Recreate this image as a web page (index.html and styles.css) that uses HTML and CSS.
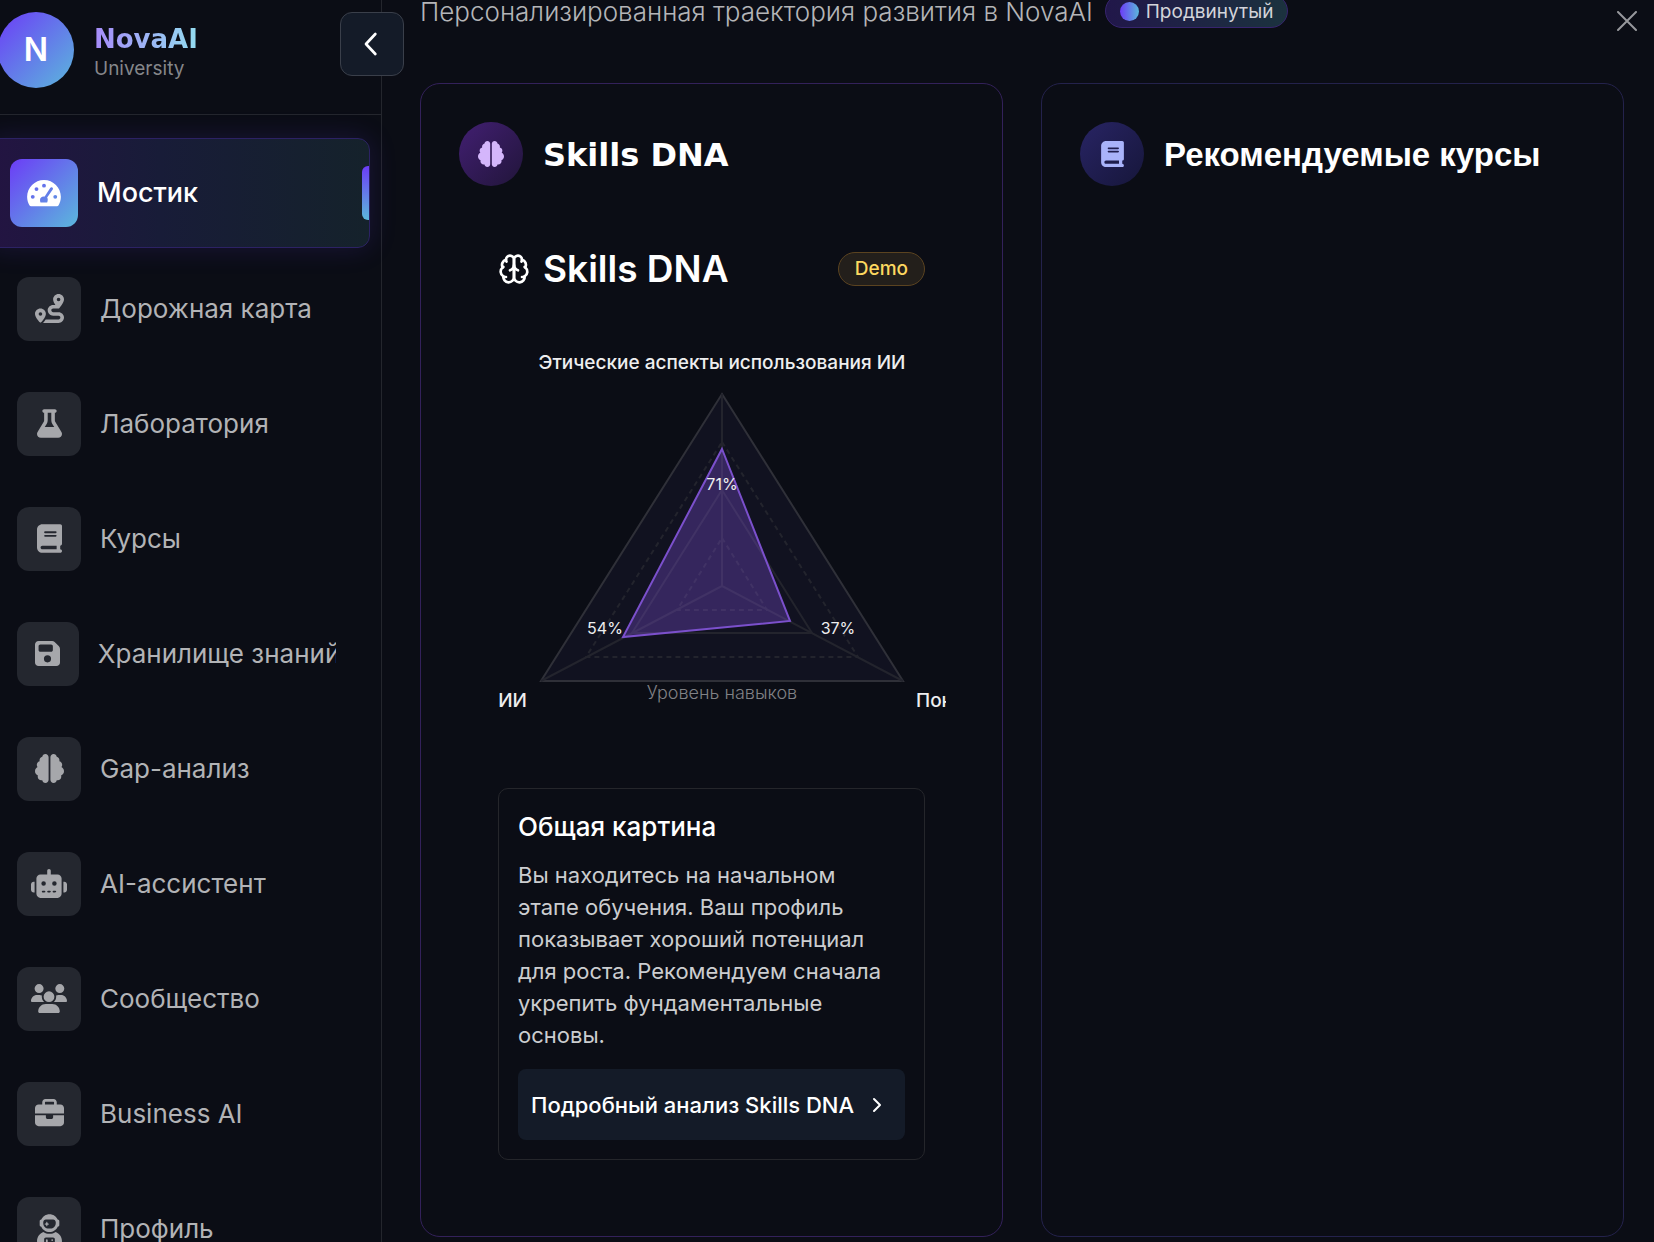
FILE: index.html
```
<!DOCTYPE html>
<html lang="ru">
<head>
<meta charset="utf-8">
<meta name="viewport" content="width=device-width, initial-scale=1">
<title>NovaAI University</title>
<link rel="stylesheet" href="styles.css">
</head>
<body>
<svg class="defs" aria-hidden="true">
  <symbol id="i-brain" viewBox="0 0 512 512"><path d="M184 0c30.900 0 56 25.100 56 56l0 400c0 30.900-25.100 56-56 56c-28.900 0-52.700-21.900-55.700-50.100c-5.200 1.400-10.700 2.100-16.300 2.100c-35.300 0-64-28.700-64-64c0-7.400 1.300-14.600 3.600-21.200C21.400 367.400 0 338.200 0 304c0-31.900 18.700-59.500 45.800-72.300C37.100 220.800 32 207 32 192c0-30.700 21.600-56.300 50.400-62.600C80.800 123.900 80 118 80 112c0-29.900 20.600-55.100 48.300-62.100C131.300 21.900 155.100 0 184 0zM328 0c28.900 0 52.600 21.900 55.700 49.900c27.800 7 48.300 32.100 48.300 62.100c0 6-.8 11.900-2.400 17.400c28.800 6.200 50.400 31.900 50.400 62.600c0 15-5.100 28.800-13.800 39.700C493.300 244.500 512 272.100 512 304c0 34.200-21.400 63.400-51.600 74.800c2.300 6.600 3.600 13.800 3.600 21.200c0 35.300-28.700 64-64 64c-5.600 0-11.100-.7-16.300-2.100c-3 28.200-26.800 50.100-55.700 50.100c-30.900 0-56-25.100-56-56l0-400c0-30.900 25.100-56 56-56z"/></symbol>
  <symbol id="i-book" viewBox="0 0 448 512"><path d="M96 0C43 0 0 43 0 96L0 416c0 53 43 96 96 96l288 0 32 0c17.700 0 32-14.300 32-32s-14.300-32-32-32l0-64c17.700 0 32-14.300 32-32l0-320c0-17.700-14.300-32-32-32L384 0 96 0zm0 384l256 0 0 64L96 448c-17.700 0-32-14.300-32-32s14.300-32 32-32zm32-240c0-8.800 7.200-16 16-16l192 0c8.800 0 16 7.200 16 16s-7.200 16-16 16l-192 0c-8.800 0-16-7.200-16-16zm16 48l192 0c8.800 0 16 7.200 16 16s-7.200 16-16 16l-192 0c-8.800 0-16-7.200-16-16s7.200-16 16-16z"/></symbol>
</svg>
<div class="app">
  <aside class="sidebar">
    <header class="brand">
      <span class="brand-logo">N</span>
      <div class="brand-text">
        <span class="brand-name">NovaAI</span>
        <span class="brand-sub">University</span>
      </div>
      <button class="collapse" type="button" aria-label="Свернуть меню">
        <svg viewBox="0 0 24 24" width="32" height="32"><path d="M14.500 4.500 7.500 12l7 7.500"/></svg>
      </button>
    </header>
    <nav class="nav">
      <a class="nav-item active" href="#">
        <span class="nav-icon"><svg viewBox="0 0 576 512" width="34" height="30"><path fill-rule="evenodd" d="M288 32C129 32 0 161 0 320c0 52.800 14.250 102.260 39 144.800 5.600 9.600 16.300 15.200 27.500 15.200h443c11.100 0 21.800-5.600 27.400-15.200C561.750 422.260 576 372.800 576 320c0-159-129-288-288-288zM288 98a33 33 0 1 1 0 66 33 33 0 1 1 0-66zM96 289a33 33 0 1 1 0 66 33 33 0 1 1 0-66zM160 156a33 33 0 1 1 0 66 33 33 0 1 1 0-66zM480 289a33 33 0 1 1 0 66 33 33 0 1 1 0-66zM437 196 342 334c6 10 10 20 10 34 0 18-3 34-10 48H228c-5-12-8-26-8-42 0-34 28-58 62-58 8 0 12 0 18 1l94-148c8-12 24-15 36-8s16 23 7 35z"/></svg></span>
        <span class="nav-label">Мостик</span>
      </a>
      <a class="nav-item" href="#">
        <span class="nav-icon"><svg viewBox="0 0 512 512" width="29" height="29"><path d="M512 96c0 50.200-59.100 125.100-84.600 155c-3.800 4.400-9.400 6.100-14.500 5L320 256c-17.700 0-32 14.300-32 32s14.300 32 32 32l96 0c53 0 96 43 96 96s-43 96-96 96l-276.400 0c8.700-9.900 19.300-22.600 30-36.800c6.300-8.400 12.800-17.600 19-27.200L416 448c17.700 0 32-14.300 32-32s-14.300-32-32-32l-96 0c-53 0-96-43-96-96s43-96 96-96l39.800 0c-21-31.500-39.800-67.700-39.800-96c0-53 43-96 96-96s96 43 96 96zM117.100 489.100c-3.800 4.300-7.200 8.100-10.100 11.300l-1.800 2-.2-.2c-6 4.600-14.600 4-20-1.800C59.800 473 0 402.500 0 352c0-53 43-96 96-96s96 43 96 96c0 30-21.100 67-43.500 97.900c-10.700 14.700-21.700 28-30.800 38.500l-.6 .7zM128 352a32 32 0 1 0 -64 0 32 32 0 1 0 64 0zM416 128a32 32 0 1 0 0-64 32 32 0 1 0 0 64z"/></svg></span>
        <span class="nav-label">Дорожная карта</span>
      </a>
      <a class="nav-item" href="#">
        <span class="nav-icon"><svg viewBox="0 0 448 512" width="25" height="29"><path d="M288 0L160 0 128 0C110.300 0 96 14.300 96 32s14.300 32 32 32l0 132.800c0 11.800-3.300 23.500-9.500 33.500L10.300 406.200C3.600 417.200 0 429.700 0 442.600C0 480.900 31.100 512 69.400 512l309.200 0c38.300 0 69.400-31.100 69.400-69.400c0-12.800-3.600-25.400-10.300-36.400L329.500 230.400c-6.200-10.100-9.500-21.700-9.500-33.500L320 64c17.700 0 32-14.300 32-32s-14.300-32-32-32L288 0zM192 196.800L192 64l64 0 0 132.800c0 23.700 6.600 46.900 19 67.100L309.500 320l-171 0L173 263.900c12.400-20.200 19-43.400 19-67.100z"/></svg></span>
        <span class="nav-label">Лаборатория</span>
      </a>
      <a class="nav-item" href="#">
        <span class="nav-icon"><svg width="25" height="29"><use href="#i-book"/></svg></span>
        <span class="nav-label">Курсы</span>
      </a>
      <a class="nav-item" href="#">
        <span class="nav-icon"><svg viewBox="0 0 448 512" width="25" height="29"><path d="M64 32C28.700 32 0 60.700 0 96L0 416c0 35.300 28.700 64 64 64l320 0c35.300 0 64-28.700 64-64l0-242.700c0-17-6.700-33.300-18.700-45.300L352 50.700C340 38.700 323.700 32 306.700 32L64 32zm0 96c0-17.700 14.300-32 32-32l192 0c17.700 0 32 14.300 32 32l0 64c0 17.700-14.300 32-32 32L96 224c-17.700 0-32-14.300-32-32l0-64zM224 288a64 64 0 1 1 0 128 64 64 0 1 1 0-128z"/></svg></span>
        <span class="nav-label">Хранилище знаний</span>
      </a>
      <a class="nav-item" href="#">
        <span class="nav-icon"><svg width="29" height="29"><use href="#i-brain"/></svg></span>
        <span class="nav-label">Gap-анализ</span>
      </a>
      <a class="nav-item" href="#">
        <span class="nav-icon"><svg viewBox="0 0 640 512" width="36" height="29"><path d="M320 0c17.700 0 32 14.300 32 32l0 64 120 0c39.800 0 72 32.200 72 72l0 272c0 39.800-32.200 72-72 72l-304 0c-39.800 0-72-32.200-72-72l0-272c0-39.800 32.200-72 72-72l120 0 0-64c0-17.700 14.300-32 32-32zM208 384c-8.800 0-16 7.200-16 16s7.200 16 16 16l32 0c8.800 0 16-7.200 16-16s-7.200-16-16-16l-32 0zm96 0c-8.800 0-16 7.200-16 16s7.200 16 16 16l32 0c8.800 0 16-7.200 16-16s-7.200-16-16-16l-32 0zm96 0c-8.800 0-16 7.200-16 16s7.200 16 16 16l32 0c8.800 0 16-7.200 16-16s-7.200-16-16-16l-32 0zM264 256a40 40 0 1 0 -80 0 40 40 0 1 0 80 0zm152 40a40 40 0 1 0 0-80 40 40 0 1 0 0 80zM48 224l16 0 0 192-16 0c-26.500 0-48-21.500-48-48l0-96c0-26.500 21.500-48 48-48zm544 0c26.500 0 48 21.500 48 48l0 96c0 26.500-21.500 48-48 48l-16 0 0-192 16 0z"/></svg></span>
        <span class="nav-label">AI-ассистент</span>
      </a>
      <a class="nav-item" href="#">
        <span class="nav-icon"><svg viewBox="0 0 640 512" width="36" height="29"><path d="M144 0a80 80 0 1 1 0 160A80 80 0 1 1 144 0zM512 0a80 80 0 1 1 0 160A80 80 0 1 1 512 0zM0 298.700C0 239.800 47.800 192 106.700 192l42.700 0c15.900 0 31 3.500 44.600 9.700c-1.300 7.200-1.900 14.700-1.900 22.300c0 38.200 16.800 72.500 43.300 96c-.2 0-.4 0-.7 0L21.300 320C9.600 320 0 310.400 0 298.700zM405.300 320c-.2 0-.4 0-.7 0c26.600-23.500 43.300-57.800 43.300-96c0-7.600-.7-15-1.900-22.300c13.600-6.300 28.700-9.700 44.600-9.700l42.700 0C592.200 192 640 239.800 640 298.700c0 11.800-9.600 21.300-21.300 21.300l-213.300 0zM224 224a96 96 0 1 1 192 0 96 96 0 1 1 -192 0zM128 485.300C128 411.700 187.700 352 261.300 352l117.300 0C452.300 352 512 411.700 512 485.300c0 14.700-11.900 26.700-26.700 26.700l-330.700 0c-14.700 0-26.700-11.900-26.700-26.700z"/></svg></span>
        <span class="nav-label">Сообщество</span>
      </a>
      <a class="nav-item" href="#">
        <span class="nav-icon"><svg viewBox="0 0 512 512" width="29" height="29"><path d="M184 48l144 0c4.400 0 8 3.600 8 8l0 40L176 96l0-40c0-4.400 3.600-8 8-8zm-56 8l0 40L64 96C28.700 96 0 124.700 0 160l0 96 192 0 128 0 192 0 0-96c0-35.300-28.700-64-64-64l-64 0 0-40c0-30.900-25.100-56-56-56L184 0c-30.900 0-56 25.100-56 56zM512 288l-192 0 0 32c0 17.700-14.300 32-32 32l-64 0c-17.700 0-32-14.300-32-32l0-32L0 288 0 416c0 35.300 28.700 64 64 64l384 0c35.300 0 64-28.700 64-64l0-128z"/></svg></span>
        <span class="nav-label">Business AI</span>
      </a>
      <a class="nav-item" href="#">
        <span class="nav-icon"><svg viewBox="0 0 448 512" width="25" height="29"><path d="M370.700 96.100C346.100 39.500 289.700 0 224 0S101.900 39.500 77.300 96.100C60.900 97.500 48 111.200 48 128l0 64c0 16.800 12.900 30.500 29.300 31.900C101.900 280.500 158.300 320 224 320s122.100-39.500 146.700-96.100c16.400-1.400 29.300-15.100 29.300-31.900l0-64c0-16.800-12.900-30.500-29.300-31.900zM336 144l0 16c0 53-43 96-96 96l-32 0c-53 0-96-43-96-96l0-16c0-26.500 21.500-48 48-48l128 0c26.500 0 48 21.500 48 48zM189.300 162.700l-6-21.200c-.9-3.300-3.900-5.500-7.300-5.500s-6.400 2.200-7.300 5.500l-6 21.200-21.200 6c-3.300 .9-5.500 3.900-5.500 7.300s2.200 6.400 5.500 7.300l21.200 6 6 21.200c.9 3.300 3.900 5.500 7.300 5.500s6.400-2.200 7.300-5.500l6-21.200 21.200-6c3.300-.9 5.500-3.900 5.500-7.300s-2.200-6.400-5.500-7.300l-21.200-6zM112.700 316.500C46.700 342.600 0 407 0 482.300C0 498.700 13.300 512 29.700 512l98.300 0 0-64c0-17.700 14.300-32 32-32l128 0c17.700 0 32 14.300 32 32l0 64 98.300 0c16.400 0 29.700-13.300 29.700-29.700c0-75.300-46.700-139.700-112.700-165.800C303.900 338.800 265.500 352 224 352s-79.900-13.200-111.300-35.500zM176 448c-8.800 0-16 7.200-16 16l0 48 32 0 0-48c0-8.800-7.200-16-16-16zm96 32a16 16 0 1 0 0-32 16 16 0 1 0 0 32z"/></svg></span>
        <span class="nav-label">Профиль</span>
      </a>
    </nav>
  </aside>

  <main class="main">
    <header class="topline">
      <p class="subtitle">Персонализированная траектория развития в NovaAI</p>
      <span class="level"><i class="level-dot"></i>Продвинутый</span>
      <button class="close" type="button" aria-label="Закрыть">
        <svg viewBox="0 0 20 20" width="20" height="20"><path d="M1 1l18 18M19 1 1 19"/></svg>
      </button>
    </header>

    <div class="cards">
      <section class="card card-skills">
        <header class="card-head">
          <span class="card-icon"><svg width="26" height="26"><use href="#i-brain"/></svg></span>
          <h2 class="card-title wide">Skills DNA</h2>
        </header>
        <div class="skills">
          <div class="skills-head">
            <svg class="skills-icon" viewBox="0 0 24 24" width="32" height="32"><path d="M12 5a3 3 0 1 0-5.997.125 4 4 0 0 0-2.526 5.770 4 4 0 0 0 .556 6.588A4 4 0 1 0 12 18Z"/><path d="M12 5a3 3 0 1 1 5.997.125 4 4 0 0 1 2.526 5.770 4 4 0 0 1-.556 6.588A4 4 0 1 1 12 18Z"/><path d="M15 13a4.500 4.500 0 0 1-3-4 4.500 4.500 0 0 1-3 4"/><path d="M17.599 6.500a3 3 0 0 0 .399-1.375"/><path d="M6.003 5.125A3 3 0 0 0 6.401 6.500"/><path d="M3.477 10.896a4 4 0 0 1 .585-.396"/><path d="M19.938 10.500a4 4 0 0 1 .585.396"/><path d="M6 18a4 4 0 0 1-1.967-.516"/><path d="M19.967 17.484A4 4 0 0 1 18 18"/></svg>
            <h3 class="skills-title">Skills DNA</h3>
            <span class="demo">Demo</span>
          </div>
          <svg class="radar" viewBox="0 0 448 400" width="448" height="400" role="img" aria-label="Уровень навыков">
            <g class="grid">
              <path class="area" d="M224 54 405 341H43z"/>
              <path class="dash" d="M224 102 360 317H88z"/>
              <path class="ring" d="M224 150 314 293H134z"/>
              <path class="dash" d="M224 198 269 270H179z"/>
              <path class="ring" d="M224 246V54M224 246l181 95M224 246 43 341"/>
            </g>
            <path class="value" d="M224 109 292 281 125 297z"/>
            <g class="axis">
              <text x="224" y="29" text-anchor="middle">Этические аспекты использования ИИ</text>
              <text x="29" y="367" text-anchor="end">ИИ</text>
              <text x="418" y="367">Пон</text>
            </g>
            <g class="percent">
              <text x="224" y="150">71%</text>
              <text x="107" y="294">54%</text>
              <text x="340" y="294">37%</text>
            </g>
            <text class="caption" x="224" y="359">Уровень навыков</text>
          </svg>
          <div class="summary">
            <h4 class="summary-title">Общая картина</h4>
            <p class="summary-text">Вы находитесь на начальном этапе обучения. Ваш профиль показывает хороший потенциал для роста. Рекомендуем сначала укрепить фундаментальные основы.</p>
            <button class="details" type="button">Подробный анализ Skills DNA
              <svg viewBox="0 0 24 24" width="24" height="24"><path d="m9 18 6-6-6-6"/></svg>
            </button>
          </div>
        </div>
      </section>
      <section class="card card-courses">
        <header class="card-head">
          <span class="card-icon"><svg width="23" height="26"><use href="#i-book"/></svg></span>
          <h2 class="card-title">Рекомендуемые курсы</h2>
        </header>
      </section>
    </div>
  </main>
</div>
</body>
</html>
```
FILE: styles.css
```
* { box-sizing: border-box; }

body {
  margin: 0;
  background: #0b0d15;
  color: #fff;
  font-family: Inter, "Liberation Sans", sans-serif;
  overflow: hidden;
}

h2, h3, h4, p { margin: 0; }
button { font: inherit; color: inherit; cursor: pointer; }
svg { display: block; fill: currentColor; }
.defs { position: absolute; width: 0; height: 0; }

.app { display: flex; height: 100vh; }

/* Sidebar */
.sidebar {
  flex: none;
  width: 382px;
  border-right: 1px solid #24262d;
}
.brand {
  position: relative;
  display: flex;
  align-items: center;
  gap: 20px;
  height: 115px;
  margin-left: -2px;
  padding-bottom: 15px;
  border-bottom: 1px solid #24262d;
}
.brand-logo {
  display: grid;
  place-items: center;
  width: 76px;
  height: 76px;
  border-radius: 50%;
  background: linear-gradient(135deg, #6c3cf7, #5bb8dc);
  font-size: 32px;
  font-weight: 600;
}
.brand-text { display: flex; flex-direction: column; padding-top: 6px; }
.brand-name {
  font-family: "DejaVu Sans", sans-serif;
  font-size: 26px;
  font-weight: 700;
  line-height: 32px;
  background: linear-gradient(90deg, #a78bfa, #93dcf0);
  background-clip: text;
  color: transparent;
}
.brand-sub { font-size: 19px; line-height: 28px; color: #85868a; }
.collapse {
  position: absolute;
  top: 12px;
  right: -23px;
  display: grid;
  place-items: center;
  width: 64px;
  height: 64px;
  padding: 0;
  border: 1px solid #3a3f4a;
  border-radius: 12px;
  background: #141b28;
}
.collapse svg { fill: none; stroke: #fff; stroke-width: 2; stroke-linecap: round; stroke-linejoin: round; }

.nav { display: flex; flex-direction: column; padding-top: 23px; }
.nav-item {
  display: flex;
  align-items: center;
  gap: 19px;
  height: 115px;
  padding: 0 45px 0 17px;
  color: #b2b3b6;
  font-size: 26px;
  text-decoration: none;
}
.nav-icon {
  flex: 0 2 64px;
  display: grid;
  place-items: center;
  height: 64px;
  border-radius: 12px;
  background: #24272f;
  color: #a6a7ab;
}
.nav-label { min-width: 0; overflow: hidden; white-space: nowrap; line-height: 40px; }
.nav-item.active {
  position: relative;
  height: 110px;
  margin: 0 11px 3px -12px;
  padding-left: 21px;
  border: 1px solid #2c2264;
  border-radius: 12px;
  background: linear-gradient(90deg, #231442, #181c38 45%, #15222b);
  box-shadow: 0 0 28px rgba(108, 60, 247, .16);
  color: #fff;
  font-size: 27px;
  font-weight: 500;
}
.active .nav-icon {
  flex: none;
  width: 68px;
  height: 68px;
  background: linear-gradient(135deg, #6c3cf7, #5bb8dc);
  color: #fff;
}
.nav-item.active::after {
  content: "";
  position: absolute;
  right: 0;
  top: 27px;
  width: 7px;
  height: 54px;
  border-radius: 6px 0 0 6px;
  background: linear-gradient(#6c3cf7, #5bb8dc);
}

/* Main area */
.main { flex: 1; min-width: 0; padding: 0 30px 5px 38px; }
.topline { display: flex; align-items: flex-start; height: 83px; }
.subtitle { font-size: 26px; font-weight: 300; line-height: 24px; color: #b4b5b8; white-space: nowrap; }
.level {
  display: flex;
  align-items: center;
  gap: 7px;
  height: 34px;
  margin: -6px 0 0 12px;
  padding: 0 14px;
  border: 1px solid #37246e;
  border-radius: 17px;
  background: linear-gradient(90deg, #21174a, #1b323e);
  color: #d3d4da;
  font-size: 19px;
}
.level-dot { width: 19px; height: 19px; border-radius: 50%; background: linear-gradient(90deg, #6c3cf7, #5bb8dc); }
.close { margin: 11px -13px 0 auto; padding: 0; border: 0; background: none; color: #97989c; }
.close svg { stroke: currentColor; stroke-width: 2; stroke-linecap: round; }

.cards { display: grid; grid-template-columns: repeat(2, minmax(0, 1fr)); gap: 38px; }
.card { border: 1px solid #33215a; border-radius: 20px; padding: 38px; }
.card-courses { border-color: #24224c; }
.card-head { display: flex; align-items: center; gap: 20px; }
.card-icon {
  display: grid;
  place-items: center;
  width: 64px;
  height: 64px;
  border-radius: 50%;
  background: linear-gradient(135deg, #421f72, #21153a);
  color: #d4b6fb;
}
.card-courses .card-icon { background: linear-gradient(135deg, #282464, #16163a); color: #a9b3fa; }
.card-title { padding-top: 2px; font-family: "Liberation Sans", sans-serif; font-size: 33px; font-weight: 700; line-height: 40px; }
.card-title.wide { font-family: "DejaVu Sans", sans-serif; font-size: 32px; }

.skills { padding: 58px 39px 38px; }
.skills-head { display: flex; align-items: center; gap: 13px; height: 50px; }
.skills-icon { fill: none; stroke: #fff; stroke-width: 2; stroke-linecap: round; stroke-linejoin: round; }
.skills-title { font-size: 37px; font-weight: 600; line-height: 50px; }
.demo {
  margin-left: auto;
  padding: 0 16px;
  border: 1px solid #5b4320;
  border-radius: 17px;
  background: #231f1b;
  color: #fcd860;
  font-size: 19px;
  font-weight: 500;
  line-height: 32px;
}

/* Radar chart: wider than its column, labels are cut at the edge */
.radar { margin: 46px -21px 48px 0; overflow: hidden; }
.area { fill: rgba(140, 110, 246, .05); stroke: #2f3038; stroke-width: 2; }
.ring { fill: none; stroke: #23242d; stroke-width: 2; }
.dash { fill: none; stroke: #23242d; stroke-width: 2; stroke-dasharray: 5 4; }
.value { fill: rgba(122, 80, 210, .34); stroke: #7b50cc; stroke-width: 2; }
.axis { fill: #eeeeef; font-size: 19px; font-weight: 500; }
.percent { fill: #eeeeef; font-size: 16px; text-anchor: middle; }
.caption { fill: #808185; font-size: 18px; font-weight: 300; text-anchor: middle; }

.summary { padding: 19px; border: 1px solid #25262b; border-radius: 10px; }
.summary-title { font-size: 26px; font-weight: 500; line-height: 38px; }
.summary-text { margin: 13px 0 18px; padding-right: 8px; font-size: 22px; line-height: 32px; color: #cccdd0; }
.details {
  display: flex;
  align-items: center;
  gap: 11px;
  width: 100%;
  height: 71px;
  padding: 0 13px;
  border: 0;
  border-radius: 8px;
  background: #141b28;
  font-size: 22px;
  font-weight: 500;
  white-space: nowrap;
}
.details svg { fill: none; stroke: #fff; stroke-width: 2; stroke-linecap: round; stroke-linejoin: round; }
```
